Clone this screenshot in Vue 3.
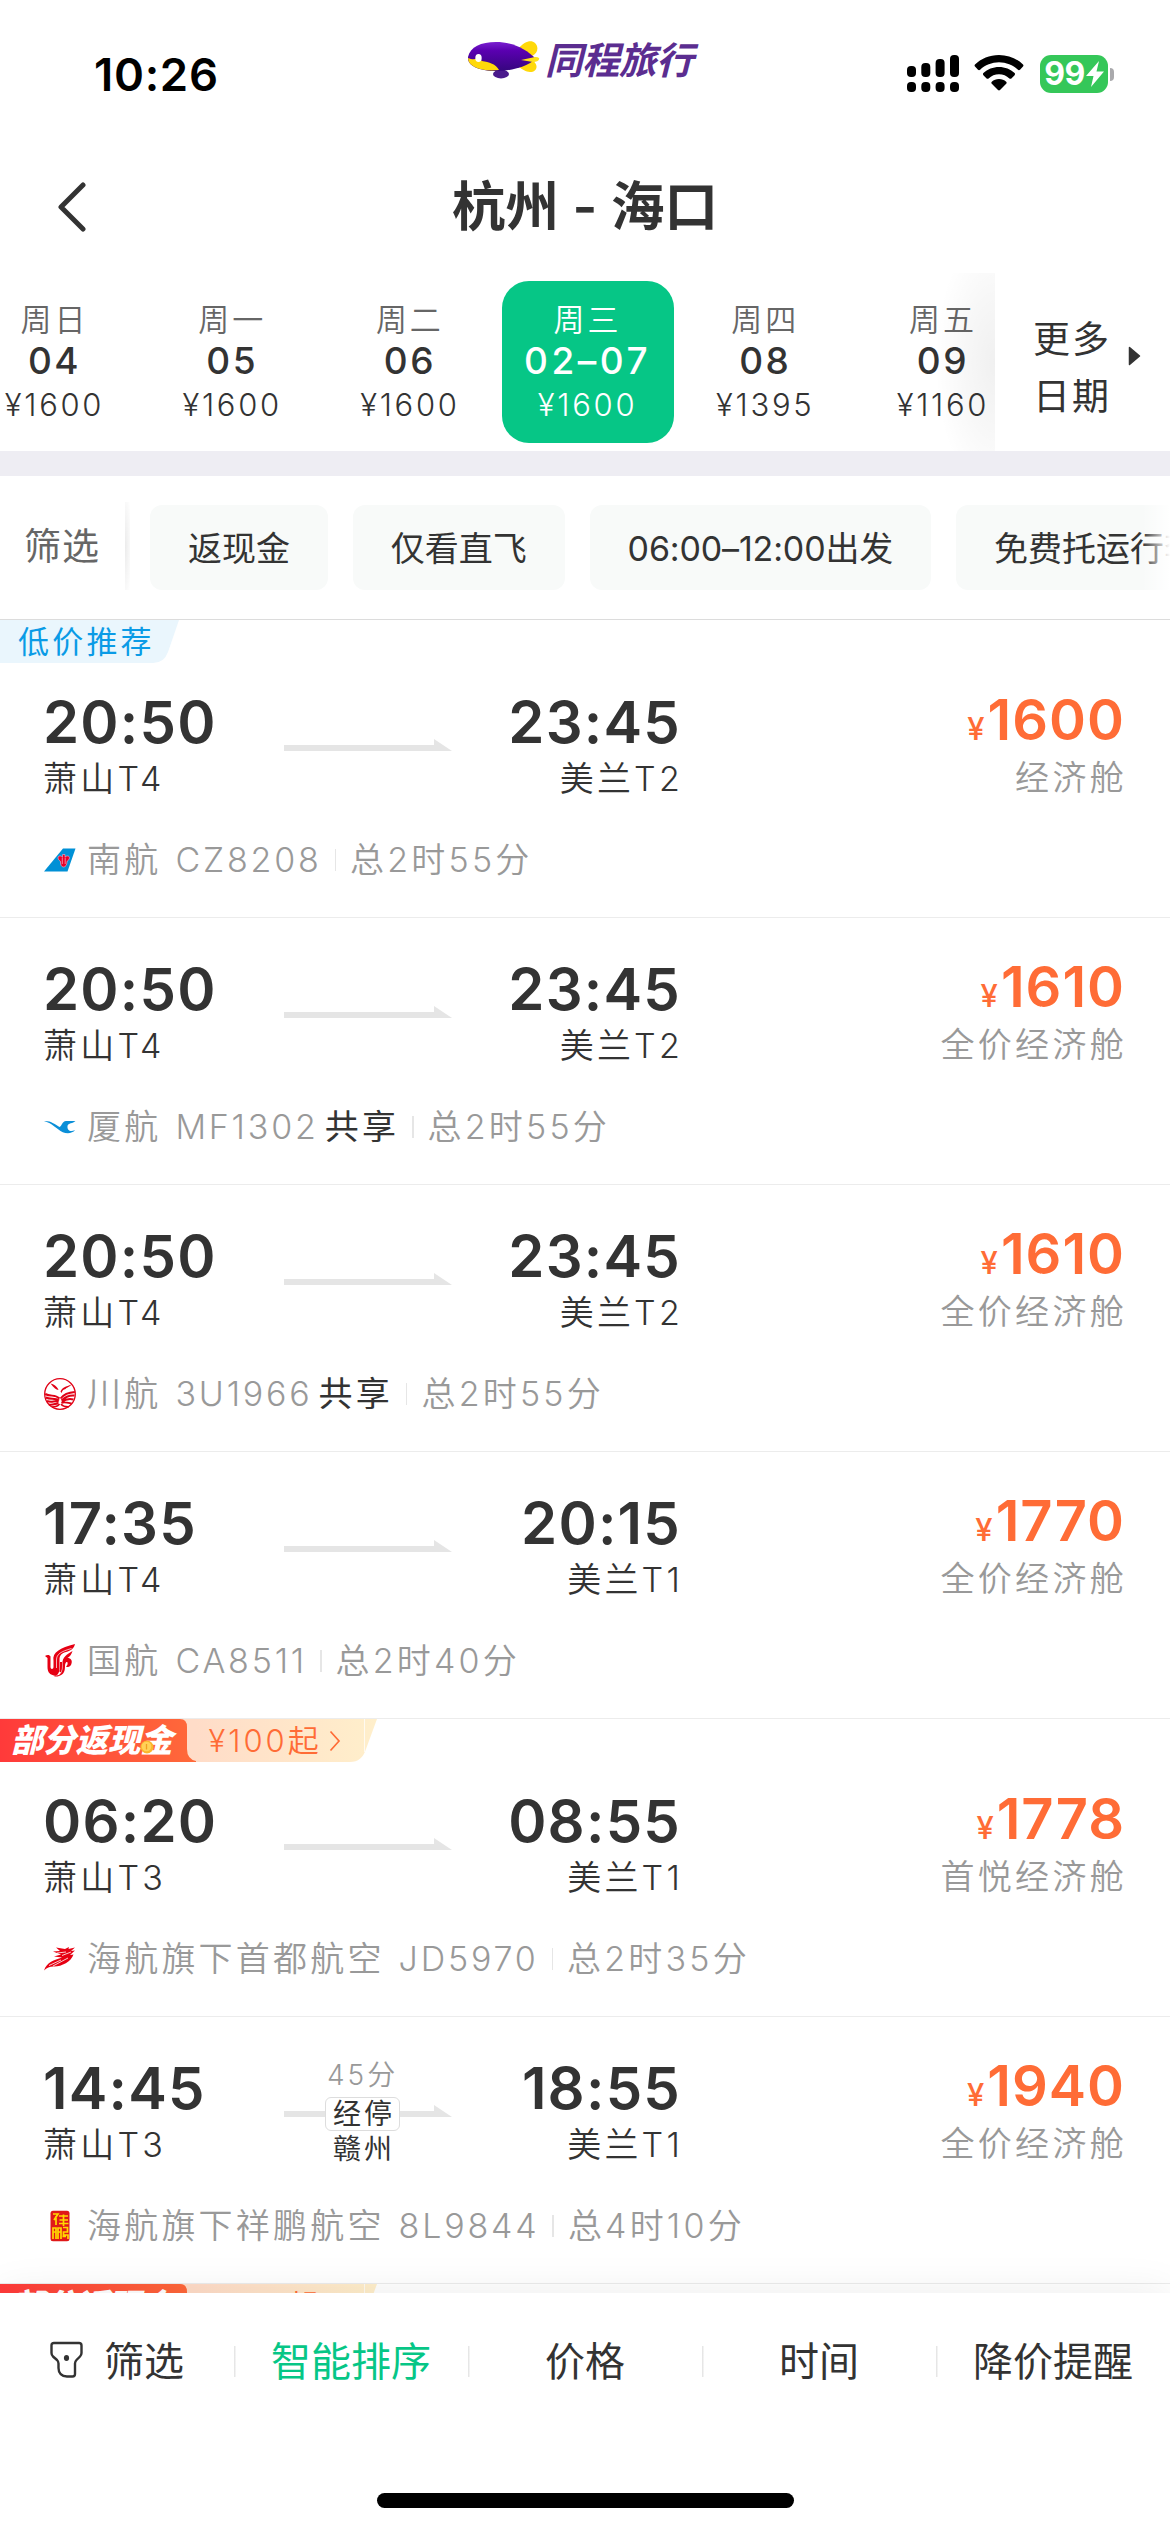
<script setup>
const days = [
  { week: '周日', day: '04', price: '¥1600' },
  { week: '周一', day: '05', price: '¥1600' },
  { week: '周二', day: '06', price: '¥1600' },
  { week: '周三', day: '02–07', price: '¥1600', active: true },
  { week: '周四', day: '08', price: '¥1395' },
  { week: '周五', day: '09', price: '¥1160' }
]

const chips = ['返现金', '仅看直飞', '06:00–12:00出发', '免费托运行李']

const flights = [
  { dep: '20:50', from: '萧山T4', arr: '23:45', to: '美兰T2', price: '1600', cabin: '经济舱', icon: 'cz', airline: '南航', code: 'CZ8208', total: '总2时55分', tag: 'low' },
  { dep: '20:50', from: '萧山T4', arr: '23:45', to: '美兰T2', price: '1610', cabin: '全价经济舱', icon: 'mf', airline: '厦航', code: 'MF1302', share: true, total: '总2时55分' },
  { dep: '20:50', from: '萧山T4', arr: '23:45', to: '美兰T2', price: '1610', cabin: '全价经济舱', icon: 'sc', airline: '川航', code: '3U1966', share: true, total: '总2时55分' },
  { dep: '17:35', from: '萧山T4', arr: '20:15', to: '美兰T1', price: '1770', cabin: '全价经济舱', icon: 'ca', airline: '国航', code: 'CA8511', total: '总2时40分' },
  { dep: '06:20', from: '萧山T3', arr: '08:55', to: '美兰T1', price: '1778', cabin: '首悦经济舱', icon: 'jd', airline: '海航旗下首都航空', code: 'JD5970', total: '总2时35分', tag: 'cash' },
  { dep: '14:45', from: '萧山T3', arr: '18:55', to: '美兰T1', price: '1940', cabin: '全价经济舱', icon: 'lk', airline: '海航旗下祥鹏航空', code: '8L9844', total: '总4时10分', stop: { time: '45分', city: '赣州' } },
  { tag: 'cash' }
]

const tabs = [
  { name: '筛选', icon: true },
  { name: '智能排序', active: true },
  { name: '价格' },
  { name: '时间' },
  { name: '降价提醒' }
]
</script>

<template>
  <div class="screen">
    <header class="status">
      <span class="clock">10:26</span>
      <div class="brand">
        <svg class="blimp" width="72" height="38" viewBox="0 0 72 38">
          <defs>
            <linearGradient id="hull" x1="0" y1="0" x2="0" y2="1">
              <stop offset="0" stop-color="#7a1fd0" />
              <stop offset=".3" stop-color="#5a00b0" />
              <stop offset="1" stop-color="#35067e" />
            </linearGradient>
          </defs>
          <path d="M51 7 C56 1 63 -2 67 2 C71 6 70 12 64 15Z M51 26 L65 20 C71 24 69 31 62 31 C58 31 54 28 51 26Z" fill="#ffd90a" />
          <ellipse cx="33" cy="33" rx="8" ry="4.4" fill="#4a1a8c" />
          <path d="M0 16 C2 6 13 1 28 1 C45 1 58 8 68 18 C58 26 43 30 28 30 C12 30 -1 25 0 16Z" fill="url(#hull)" />
          <path d="M0 17 C6 20 10 16 14 20 C21 21 28 23 31 29 C14 31 0 26 0 17Z" fill="#ffd90a" />
          <path d="M53 19 L67 16 C70 16 72 17 71 18 C71 20 68 21 65 21Z" fill="#ffe11a" />
          <ellipse cx="10.500" cy="17" rx="3.200" ry="4" fill="#fff" />
        </svg>
        <span class="brand-name">同程旅行</span>
      </div>
      <div class="status-icons">
        <svg width="52" height="38" viewBox="0 0 52 38">
          <g fill="#000">
            <rect x="0" y="11" width="9" height="11" rx="4" />
            <rect x="14.300" y="8" width="9" height="14" rx="4" />
            <rect x="28.600" y="4" width="9" height="18" rx="4" />
            <rect x="43" y="0" width="9" height="22" rx="4" />
            <rect x="0" y="27" width="9" height="10" rx="4" />
            <rect x="14.300" y="27" width="9" height="10" rx="4" />
            <rect x="28.600" y="27" width="9" height="10" rx="4" />
            <rect x="43" y="27" width="9" height="10" rx="4" />
          </g>
        </svg>
        <svg class="wifi" width="50" height="36" viewBox="0 0 50 36">
          <g fill="#000">
            <path d="M25 0 C34.500 0 43 3.700 49 9.500 C49.600 10.100 49.600 11 49 11.600 L46 14.700 C45.400 15.300 44.500 15.300 43.900 14.700 C39 10 32 7.200 25 7.200 C18 7.200 11 10 6.100 14.700 C5.500 15.300 4.600 15.300 4 14.700 L1 11.600 C.4 11 .4 10.100 1 9.500 C7 3.700 15.500 0 25 0Z" />
            <path d="M25 12 C31 12 36.500 14.300 40.600 18.100 C41.200 18.700 41.200 19.600 40.600 20.200 L37.400 23.400 C36.800 24 36 24 35.400 23.400 C32.600 20.900 29 19.300 25 19.300 C21 19.300 17.400 20.900 14.600 23.400 C14 24 13.200 24 12.600 23.400 L9.400 20.200 C8.800 19.600 8.800 18.700 9.400 18.100 C13.500 14.300 19 12 25 12Z" />
            <path d="M25 24 C27.800 24 30.300 25 32.200 26.800 C32.800 27.400 32.800 28.200 32.200 28.800 L26 35 C25.400 35.600 24.600 35.600 24 35 L17.800 28.800 C17.200 28.200 17.200 27.400 17.800 26.800 C19.700 25 22.200 24 25 24Z" />
          </g>
        </svg>
        <div class="battery">
          <span class="level">99</span>
          <svg width="18" height="26" viewBox="0 0 18 26"><path d="M13 0 L0 15 L7.500 15 L5 26 L18 10.500 L10.500 10.500Z" fill="#fff" /></svg>
        </div>
        <i class="nub"></i>
      </div>
    </header>

    <div class="navbar">
      <svg class="back" width="30" height="50" viewBox="0 0 30 50"><path d="M26 3 L4 25 L26 47" fill="none" stroke="#333" stroke-width="5" stroke-linecap="round" stroke-linejoin="round" /></svg>
      <h1>杭州 - 海口</h1>
    </div>

    <section class="dates">
      <div class="strip">
        <div v-for="d in days" :key="d.day" class="day" :class="{ active: d.active }">
          <span class="week">{{ d.week }}</span>
          <span class="num">{{ d.day }}</span>
          <span class="fare">{{ d.price }}</span>
        </div>
      </div>
      <div class="more">
        <span class="more-text">更多<br />日期</span>
        <svg width="13" height="20" viewBox="0 0 13 20"><path d="M1.500 1.500 L11.500 10 L1.500 18.500Z" fill="#333" stroke="#333" stroke-width="1.500" stroke-linejoin="round" /></svg>
      </div>
    </section>

    <section class="filters">
      <span class="filters-label">筛选</span>
      <div class="chips">
        <span v-for="c in chips" :key="c" class="chip">{{ c }}</span>
      </div>
    </section>

    <main class="list">
      <article v-for="(f, i) in flights" :key="i" class="flight">
        <div v-if="f.tag === 'low'" class="ribbon">
          <svg class="ribbon-bg" width="180" height="44" viewBox="0 0 180 44"><path d="M0 0 H179 L168 32 Q164 43 153 43 H0Z" fill="#eaf6fd" /></svg>
          <span class="low-text">低价推荐</span>
        </div>
        <div v-if="f.tag === 'cash'" class="ribbon">
          <svg class="ribbon-bg" width="378" height="44" viewBox="0 0 378 44">
            <defs>
              <linearGradient id="cashRed" x1="0" y1="0" x2="1" y2="0">
                <stop offset="0" stop-color="#ff3a3a" />
                <stop offset="1" stop-color="#ff6a3a" />
              </linearGradient>
              <linearGradient id="cashTan" x1="0" y1="0" x2="1" y2="0">
                <stop offset=".2" stop-color="#ffdcc8" />
                <stop offset="1" stop-color="#ffefcb" />
              </linearGradient>
            </defs>
            <path d="M150 0 H377 L366 30 Q362 43 350 43 H150Z" fill="url(#cashTan)" />
            <path d="M364.500 0 V33" stroke="#fffaf0" stroke-width="1" />
            <path d="M0 0 H180 Q187 0 187 8 V30 Q187 40 196 42 V43 H0Z" fill="url(#cashRed)" />
          </svg>
          <span class="cash-title">部分返现金</span>
          <svg class="coin" width="14" height="14" viewBox="0 0 14 14"><circle cx="7" cy="7" r="6.500" fill="#fbb62c" /><circle cx="6.500" cy="6.500" r="4.800" fill="#ffd258" /><path d="M6.500 4 V9.500" stroke="#f0a022" stroke-width="1.300" /></svg>
          <span class="cash-amount">¥100起</span>
          <svg class="cash-arrow" width="12" height="22" viewBox="0 0 12 22"><path d="M1.500 1.500 L10 11 L1.500 20.500" fill="none" stroke="#ff6c36" stroke-width="1.700" /></svg>
        </div>

        <template v-if="f.dep">
          <div class="route">
            <div class="point">
              <b class="time">{{ f.dep }}</b>
              <span class="station">{{ f.from }}</span>
            </div>
            <div class="middle">
              <span v-if="f.stop" class="stop-time">{{ f.stop.time }}</span>
              <svg class="arrow" width="168" height="12" viewBox="0 0 168 12"><path d="M0 6 H150 V0 L168 12 H0Z" fill="#e5e5e5" /></svg>
              <span v-if="f.stop" class="stop-box">经停</span>
              <span v-if="f.stop" class="stop-city">{{ f.stop.city }}</span>
            </div>
            <div class="point end">
              <b class="time">{{ f.arr }}</b>
              <span class="station">{{ f.to }}</span>
            </div>
            <div class="cost">
              <span class="price"><small>¥</small>{{ f.price }}</span>
              <span class="cabin">{{ f.cabin }}</span>
            </div>
          </div>
          <div class="carrier">
            <svg class="logo" width="32" height="34" viewBox="0 0 32 34">
              <g v-if="f.icon === 'cz'">
                <path d="M0 28.500 L19 5.500 H31.500 L23.500 28.500Z" fill="#0090d6" />
                <path d="M14 15 C14 12.500 17 12.500 18.500 14 V11.500 H21 V14 C22.500 12.500 25.500 12.500 25.500 15 C25 18 23 17 23 19 C23 22 21.500 24 19.500 24 C17.500 24 16.500 22 16.500 19 C16.500 17 14.500 18 14 15Z" fill="#e60028" stroke="#f6b9cf" stroke-width=".6" />
                <path d="M18.300 14.500 V21 M21.200 14.500 V21" stroke="#f6b9cf" stroke-width=".7" />
              </g>
              <g v-else-if="f.icon === 'mf'">
                <path d="M0 11 C7 10.500 11 14.500 15.500 17 C18 16 18 11.500 22 11 H31.500 C29 13.500 24 13 23.500 16 C23 21 27 22 31 20 C28 24.500 19 24 14.500 19.500 C9 15.500 6 12.500 0 11Z" fill="#0a8fd8" />
              </g>
              <g v-else-if="f.icon === 'sc'">
                <circle cx="16" cy="17" r="15.300" fill="#fff" stroke="#e00015" stroke-width="1.300" />
                <path d="M6.500 6.500 C10 7 12.500 9 14.500 12.500 C14 13.500 11 12.500 6.500 6.500Z M16.500 14.500 C18 10.500 22 9.500 27.500 7.500 C25 10.500 22.500 10.500 21.500 12 C19.500 12.500 18.500 13 17.500 16Z" fill="#e00015" />
                <g fill="none" stroke="#e00015" stroke-width="2">
                  <path d="M1.200 17 C7 20 11 17 15.500 21.500 M1.800 20.500 C7 23 11 20 15 23.500 M3 24 C8 26 11 23 14.500 25 M5 27.500 C9 28.500 12 26 14.500 26.500" />
                  <path d="M30.800 15 C24 15.500 20 17 16.500 21.500 M30.500 18.500 C25 18 21 20 17.500 23.500 M29.500 22.500 C25 21.500 21 22.500 18 25 M27.500 26.500 C23 25.500 20 24.500 17.500 26" />
                  <path d="M8 30 C12 30 14 29 15.500 27 M25 29.800 C21 30 18.500 29 17 27" stroke-width="1.600" />
                </g>
              </g>
              <g v-else-if="f.icon === 'ca'">
                <path d="M1 12 C3 10.500 5.500 10.500 6.500 12.500 V23 C6.500 25.500 9.500 25.500 9.500 23 V17 C8 8 16 4 31 0 C30 4.500 27 6.500 22 8 C17 9.500 15.500 11.500 15.500 16 V25 C15 31 12 33 8.500 31 C5 30 3.500 27 3.500 23 V14Z" fill="#e60013" />
                <path d="M15 31 C19 28 18.500 25 18.500 20 C18 13 23 10.500 28.500 7 C27.500 10.500 26 12.500 23.500 14 C27 14 28.500 16.500 27.500 19.500 C27 22.500 24 24 22 22.500 C23 21.500 24 20.500 23.500 18.500 C22.500 17 21 19 21 22 C21 27 20 30.500 15 32 C13 32.700 11 32.700 10 32Z" fill="#e60013" />
                <path d="M12.500 24 V16 C12.500 10 17 7.500 27.500 4.500" fill="none" stroke="#fff" stroke-width=".7" />
                <path d="M16.200 28 C17.500 25 17 22 17 18" fill="none" stroke="#e60013" stroke-width="2" />
              </g>
              <g v-else-if="f.icon === 'jd'">
                <path d="M0 28.500 C3 20 10 18 18 15.500 L10 14.500 L17 12.500 L9 9.500 L16 9 L12 5.500 L21 7 L25 5 L24.500 7 L31 5.500 L27 9 L31 8.500 L26 13 L29.500 12.500 C27 20 17 25 9 24.500 C6 24.500 2.500 26 0 28.500Z" fill="#e60012" />
                <path d="M5 23.500 L17 18 M9 24 L24 16 M13 11 L22 10 M18 13.500 L27 10" stroke="#fff" stroke-width=".8" />
              </g>
              <g v-else>
                <rect x="6.500" y="1.800" width="19" height="30.500" rx="2.500" fill="#e01818" />
                <g fill="none" stroke="#ffd800" stroke-width="1.700">
                  <path d="M9 5 H14 L10 11 M12 7 V16 M15 7 H24 M15.500 11 H24 M15 14.500 H24.500 M19.500 5.500 V17" />
                  <path d="M9 30 V19 H12 V30 M9 23 H12 M14 30 V19 H17 V30 M14 23 H17 M19 18.500 H23.500 V23 H19.500 V26 H24 V30 M18.500 27.500 H22" />
                </g>
              </g>
            </svg>
            <span class="airline">{{ f.airline }}</span>
            <span class="code">{{ f.code }}</span>
            <span v-if="f.share" class="share">共享</span>
            <i class="sep"></i>
            <span class="total">{{ f.total }}</span>
          </div>
        </template>
      </article>
    </main>

    <footer class="bottom">
      <div class="tabs">
        <div v-for="t in tabs" :key="t.name" class="tab" :class="{ active: t.active }">
          <svg v-if="t.icon" class="funnel" width="33" height="38" viewBox="0 0 33 38">
            <path d="M4 2 H29 Q31.500 2 31.500 4.500 V12 Q31.500 14 30 15.500 L26.500 19 Q25 20.500 25 22.500 V33 Q25 35.500 22.500 35.500 H17 C11.500 35.500 8.500 32 8.500 27 V22.500 Q8.500 20.500 7 19 L3 15.500 Q1.500 14 1.500 12 V4.500 Q1.500 2 4 2Z" fill="none" stroke="#333" stroke-width="2.400" />
            <ellipse cx="16.500" cy="17" rx="2.600" ry="3" fill="#333" />
          </svg>
          <span>{{ t.name }}</span>
        </div>
      </div>
      <div class="home"></div>
    </footer>
  </div>
</template>

<style>
body {
  margin: 0;
  background: #fff;
}
</style>

<style scoped>
.screen {
  display: flex;
  flex-direction: column;
  width: 1170px;
  height: 2532px;
  overflow: hidden;
  background: #fff;
  color: #333;
  font-family: Inter, "Noto Sans CJK SC", sans-serif;
  font-weight: 400;
  white-space: nowrap;
}

.status {
  display: grid;
  grid-template-columns: 468px 1fr 263px;
  flex: none;
  height: 141px;
}
.clock {
  padding: 50px 0 0 94px;
  font-size: 45.500px;
  line-height: 50px;
  font-weight: 600;
  letter-spacing: 0.7px;
  color: #000;
}
.brand {
  display: flex;
  align-items: flex-start;
  padding-top: 41px;
}
.brand-name {
  margin: 0 0 0 5px;
  color: #5b2d90;
  font-size: 37.500px;
  line-height: 39px;
  font-weight: 700;
  font-style: italic;
  letter-spacing: -0.5px;
}
.status-icons {
  display: flex;
  align-items: flex-start;
  padding-top: 55px;
}
.wifi {
  margin-left: 15px;
}
.battery {
  display: flex;
  align-items: center;
  justify-content: center;
  gap: 1px;
  width: 68px;
  height: 38px;
  margin-left: 16px;
  border-radius: 11px;
  background: #35c759;
}
.level {
  color: #fff;
  font-size: 32px;
  line-height: 38px;
  font-weight: 700;
  letter-spacing: -0.5px;
}
.nub {
  width: 4px;
  height: 13px;
  margin: 13px 0 0 2px;
  border-radius: 0 4px 4px 0;
  background: #a9a9ac;
}

.navbar {
  display: grid;
  grid-template-columns: 200px 1fr 200px;
  align-items: center;
  flex: none;
  height: 132px;
}
.back {
  margin-left: 57px;
}
h1 {
  margin: 0;
  text-align: center;
  font-size: 53.500px;
  line-height: 60px;
  font-weight: 600;
}

.dates {
  display: flex;
  flex: none;
  height: 178px;
  border-bottom: 25px solid #eeedf3;
}
.strip {
  position: relative;
  display: flex;
  width: 995px;
  overflow: hidden;
}
.strip::after {
  content: "";
  position: absolute;
  top: 0;
  right: 0;
  width: 60px;
  height: 178px;
  background: radial-gradient(ellipse 100% 75% at right center, rgba(0, 0, 0, 0.06), rgba(0, 0, 0, 0.03) 50%, transparent);
}
.day {
  display: flex;
  flex: none;
  flex-direction: column;
  align-items: center;
  width: 172px;
  height: 162px;
  margin: 8px 2.850px 0;
  border-radius: 27px;
}
.day:first-child {
  margin-left: -31.500px;
}
.week {
  margin-top: 20px;
  color: #666;
  font-size: 31px;
  line-height: 38px;
  font-weight: 350;
  letter-spacing: 3px;
}
.num {
  margin-top: 2px;
  font-size: 37px;
  line-height: 40px;
  font-weight: 500;
  letter-spacing: 2.500px;
}
.active .num {
  letter-spacing: 3.500px;
}
.fare {
  margin-top: 5px;
  font-size: 31px;
  line-height: 38px;
  font-weight: 350;
  letter-spacing: 2.700px;
}
.active .num,
.active .week,
.active .fare {
  color: #fff;
}
.day.active {
  background: #06c686;
}
.more {
  display: flex;
  flex: 1;
  align-items: center;
  padding: 12px 0 0 38px;
}
.more-text {
  font-size: 37px;
  line-height: 57px;
  letter-spacing: 2px;
  text-align: center;
}
.more svg {
  margin: 0 0 25px 17px;
}

.filters {
  display: flex;
  flex: none;
  height: 143px;
  overflow: hidden;
}
.filters-label {
  position: relative;
  width: 101px;
  padding-left: 24px;
  color: #666;
  font-size: 37px;
  line-height: 141px;
  letter-spacing: 1px;
}
.filters-label::after {
  content: "";
  position: absolute;
  top: 26px;
  right: -5px;
  width: 5px;
  height: 88px;
  background: radial-gradient(ellipse at left center, rgba(0, 0, 0, 0.08), transparent);
}
.chips {
  position: relative;
  display: flex;
  flex: 1;
  gap: 24.800px;
  margin-left: 25px;
  padding-top: 29px;
  overflow: hidden;
}
.chips::after {
  content: "";
  position: absolute;
  top: 0;
  right: 0;
  width: 28px;
  height: 143px;
  background: linear-gradient(to right, rgba(255, 255, 255, 0), #fff);
}
.chip {
  flex: none;
  height: 85px;
  padding: 0 38px;
  border-radius: 12px;
  background: #f8faf9;
  font-size: 34px;
  line-height: 88px;
}
.chip:nth-child(3) {
  letter-spacing: -0.15px;
}

.list {
  display: flex;
  flex: 1;
  flex-direction: column;
  min-height: 0;
  overflow: hidden;
}
.flight {
  flex: none;
  box-sizing: border-box;
  height: 267.300px;
  border-top: 1.500px solid #ececec;
}
.flight:first-child {
  border-top-color: #dcdcdc;
}
.flight:has(.ribbon) {
  height: 297.500px;
}
.ribbon {
  position: relative;
  display: flex;
  align-items: center;
  height: 43px;
  margin-bottom: -12.500px;
}
.ribbon-bg {
  position: absolute;
  top: 0;
  left: 0;
}
.low-text {
  position: relative;
  margin-left: 18px;
  color: #0a9be6;
  font-size: 31px;
  line-height: 43px;
  letter-spacing: 3.200px;
}
.cash-title {
  position: relative;
  margin-left: 11px;
  color: #fff;
  font-size: 32.300px;
  line-height: 43px;
  font-weight: 900;
  font-style: italic;
}
.coin {
  position: absolute;
  top: 21px;
  left: 140px;
}
.cash-amount {
  position: relative;
  margin-left: 36px;
  color: #ff6c36;
  font-size: 31px;
  line-height: 43px;
  font-weight: 350;
  letter-spacing: 3px;
}
.cash-arrow {
  position: relative;
  margin-left: 7px;
}

.route {
  display: grid;
  grid-template-columns: 241px 167px 234px 1fr;
  height: 148px;
  padding: 41px 45px 0 43px;
}
.point {
  display: flex;
  flex-direction: column;
}
.end {
  align-items: flex-end;
}
.time {
  font-size: 58px;
  line-height: 60px;
  font-weight: 560;
  letter-spacing: 1.200px;
}
.station {
  margin-top: 7px;
  font-size: 34px;
  line-height: 40px;
  font-weight: 350;
  letter-spacing: 3.200px;
}
.end .time {
  margin-right: 4px;
}
.end .station {
  margin-right: 2px;
}
.middle {
  position: relative;
  display: grid;
  justify-items: center;
}
.arrow {
  position: absolute;
  top: 47px;
  left: 0;
}
.stop-time,
.stop-box,
.stop-city {
  position: absolute;
  font-size: 28px;
  line-height: 32px;
  letter-spacing: 3px;
}
.stop-time {
  top: 1px;
  left: 43px;
  color: #999;
  font-weight: 350;
}
.stop-box {
  top: 39px;
  left: 41px;
  padding: 0 4px 0 7px;
  border: 1.500px solid #ddd;
  border-radius: 6px;
  background: #fff;
}
.stop-city {
  top: 75px;
  left: 49px;
}
.cost {
  display: flex;
  flex-direction: column;
  align-items: flex-end;
}
.price {
  height: 60px;
  margin-top: -2px;
  color: #ff6c36;
  font-size: 56px;
  line-height: 60px;
  font-weight: 560;
  letter-spacing: 1px;
}
.price small {
  margin-right: 2px;
  font-size: 31px;
  line-height: 1;
  font-weight: 500;
}
.cabin {
  margin-top: 8px;
  margin-right: -2px;
  color: #999;
  font-size: 34px;
  line-height: 40px;
  font-weight: 350;
  letter-spacing: 3.300px;
}

.carrier {
  display: flex;
  align-items: center;
  height: 40px;
  margin-left: 44px;
  color: #999;
  font-size: 34px;
  line-height: 40px;
  font-weight: 350;
  letter-spacing: 3.200px;
}
.logo {
  margin-right: 11px;
}
.code {
  margin-left: 14px;
  letter-spacing: 2.800px;
}
.share {
  margin-left: 6px;
  color: #333;
  font-weight: 400;
}
.sep {
  width: 1.500px;
  height: 22px;
  margin: 0 14px 0 13px;
  background: #e6e6e6;
}

.bottom {
  position: relative;
  flex: none;
  height: 239px;
  background: #fff;
  box-shadow: 0 0 40px rgba(0, 0, 0, 0.08);
}
.tabs {
  display: flex;
  padding-top: 41px;
}
.tab {
  display: flex;
  flex: 1;
  align-items: center;
  justify-content: center;
  height: 56px;
  font-size: 40px;
  line-height: 56px;
}
.tab + .tab {
  background: linear-gradient(#e6e6e6, #e6e6e6) 0 12px / 1.500px 31px no-repeat;
}
.tab.active {
  color: #06c686;
}
.funnel {
  margin: -4px 21px 0 0;
}
.home {
  width: 417px;
  height: 15px;
  margin: 103px auto 0;
  border-radius: 8px;
  background: #000;
}
</style>
